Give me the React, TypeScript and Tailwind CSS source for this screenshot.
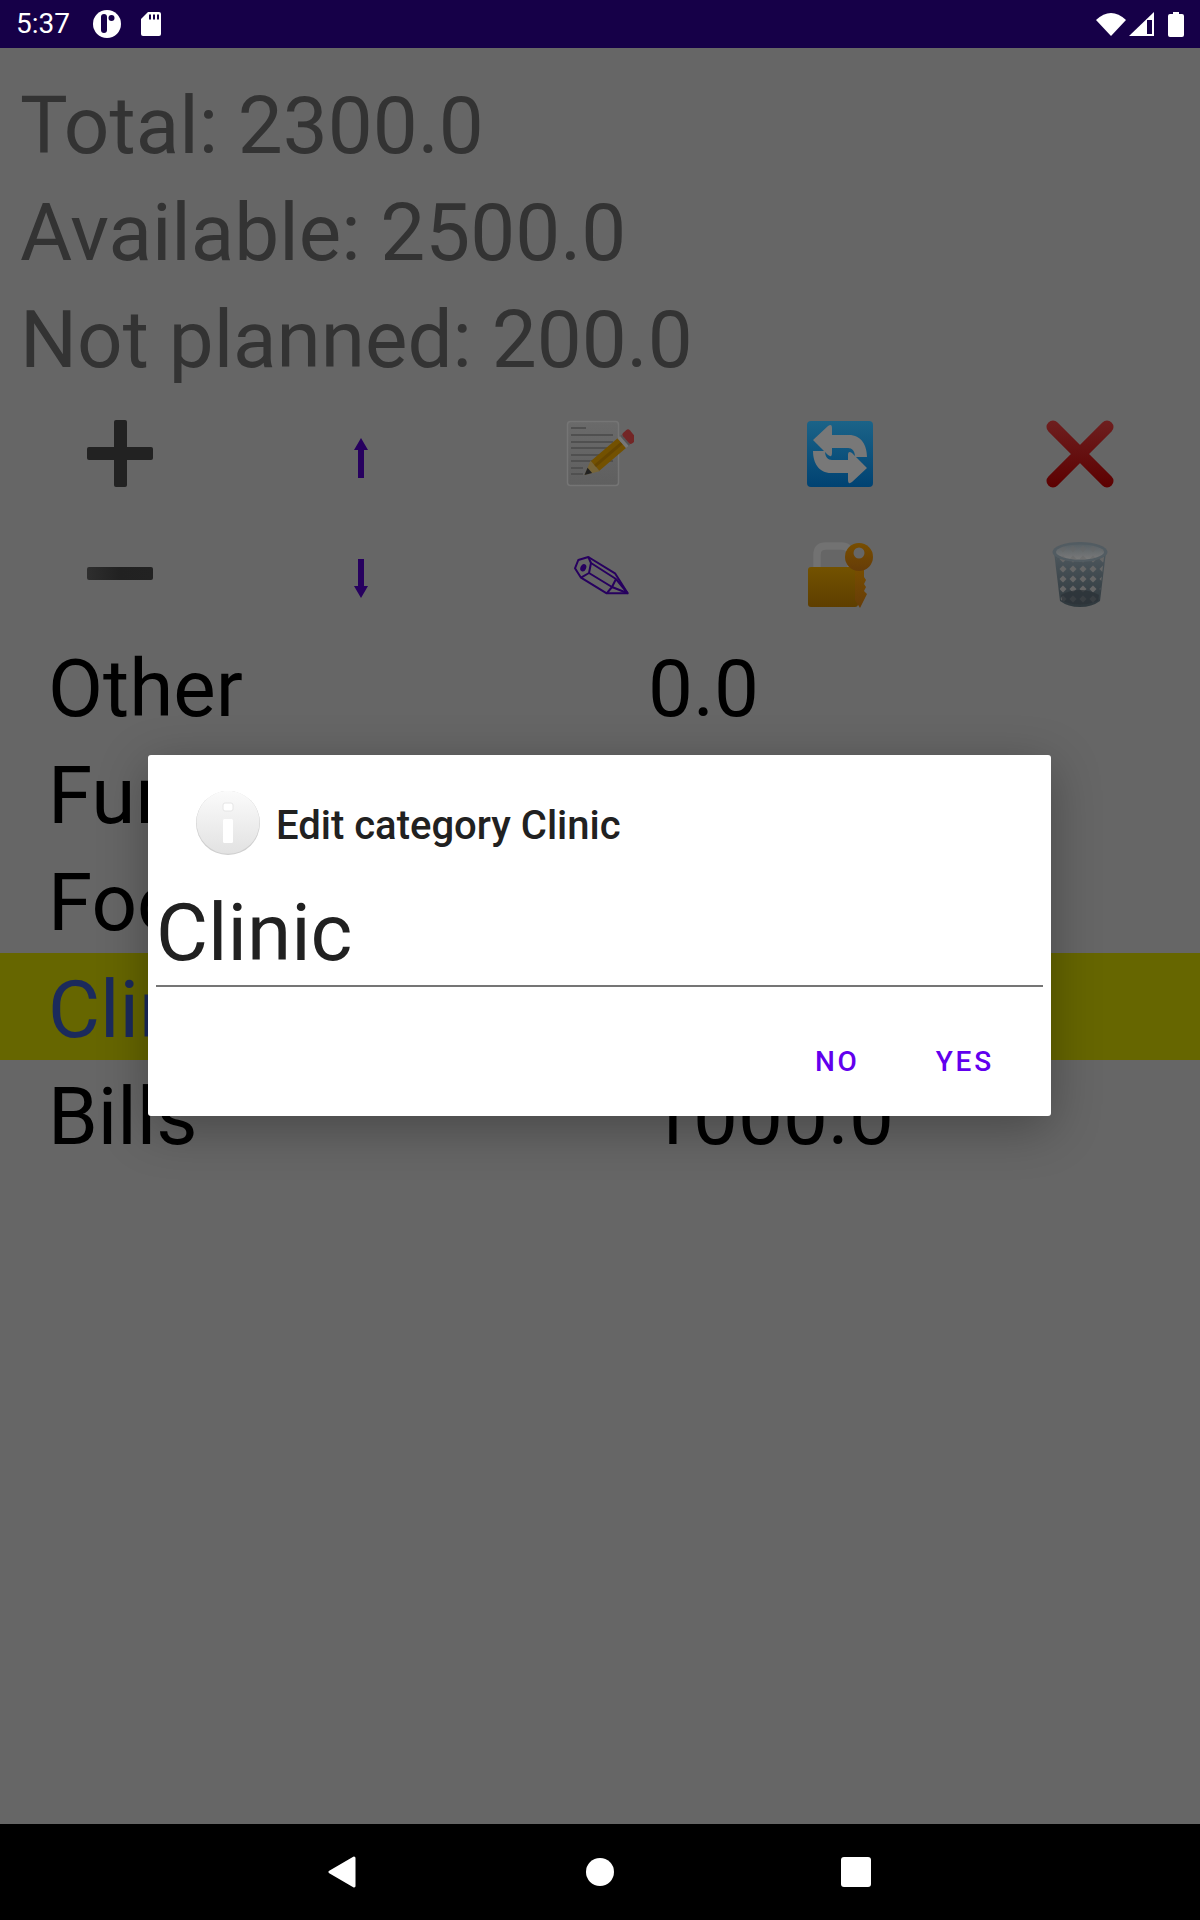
import React from "react";

const roboto = "font-['Roboto',sans-serif]";

function Plus() {
  return (
    <svg width="68" height="68" viewBox="0 0 68 68">
      <rect x="1" y="27" width="66" height="13" rx="2" fill="#222222" />
      <rect x="28" y="0" width="13" height="67" rx="2" fill="#222222" />
    </svg>
  );
}
function Minus() {
  return (
    <svg width="68" height="68" viewBox="0 0 68 68">
      <defs>
        <linearGradient id="mn" x1="0" x2="1" y1="0" y2="0">
          <stop offset="0" stopColor="#2e2e2e" />
          <stop offset="0.5" stopColor="#212121" />
          <stop offset="1" stopColor="#222222" />
        </linearGradient>
      </defs>
      <rect x="1" y="27" width="66" height="13" rx="2" fill="url(#mn)" />
    </svg>
  );
}
function ArrowUp() {
  return (
    <svg width="68" height="68" viewBox="0 0 68 68">
      <path d="M35 18 L42 30 H38 V58 H32 V30 H28 Z" fill="#27005f" />
    </svg>
  );
}
function ArrowDown() {
  return (
    <svg width="68" height="68" viewBox="0 0 68 68">
      <path d="M32 19 H38 V46 H42 L35 58 L28 46 H32 Z" fill="#27005f" />
    </svg>
  );
}
function NotePencil() {
  const lines = [7, 14, 21, 27, 34, 40, 47, 53];
  return (
    <svg width="68" height="68" viewBox="0 0 68 68">
      <defs>
        <linearGradient id="doc" x1="0" x2="0" y1="0" y2="1">
          <stop offset="0" stopColor="#6a6a6a" />
          <stop offset="1" stopColor="#5f5f5f" />
        </linearGradient>
      </defs>
      <rect x="1.5" y="1.5" width="51" height="64" rx="3" fill="url(#doc)" stroke="#757575" strokeWidth="1.5" />
      {lines.map((y, i) => (
        <rect key={y} x="5" y={y} width={i === 0 ? 15 : i > 5 ? 12 : 42} height="2" fill="#505050" />
      ))}
      <g transform="translate(18.5 55) rotate(-40.5)">
        <path d="M0 0 L14 -7 V7 Z" fill="#776538" />
        <path d="M0 0 L7 -3.5 V3.5 Z" fill="#222222" />
        <rect x="14" y="-6.5" width="35" height="13" fill="#735100" />
        <rect x="14" y="-1.5" width="35" height="3" fill="#664600" />
        <rect x="49" y="-6.5" width="3.5" height="13" fill="#777777" />
        <rect x="52.5" y="-6.5" width="2" height="13" fill="#555555" />
        <rect x="54.5" y="-7" width="9" height="14" rx="2.5" fill="#732626" />
      </g>
    </svg>
  );
}
function Refresh() {
  const arrow =
    "M6 19 L21 5 Q25 2 25 7 V14 H42 C54 14 60 24 60 36 H48 C48 30 45 27 41 27 H25 V32 Q25 37 21 34 Z";
  return (
    <svg width="66" height="66" viewBox="0 0 66 66">
      <defs>
        <linearGradient id="bl" x1="0" x2="0" y1="0" y2="1">
          <stop offset="0" stopColor="#1b6388" />
          <stop offset="1" stopColor="#004272" />
        </linearGradient>
      </defs>
      <rect x="0" y="0" width="66" height="66" rx="4" fill="url(#bl)" />
      <path d={arrow} fill="#787878" />
      <path d={arrow} fill="#787878" transform="rotate(180 33 33)" />
    </svg>
  );
}
function Cross() {
  return (
    <svg width="68" height="68" viewBox="0 0 68 68">
      <defs>
        <linearGradient id="xg" gradientUnits="userSpaceOnUse" x1="0" x2="0" y1="0" y2="68">
          <stop offset="0" stopColor="#6e1f1f" />
          <stop offset="1" stopColor="#5c0000" />
        </linearGradient>
      </defs>
      <path d="M7 7 L61 61 M61 7 L7 61" stroke="url(#xg)" strokeWidth="13" strokeLinecap="round" fill="none" />
    </svg>
  );
}
function OutlinePencil() {
  return (
    <svg width="68" height="68" viewBox="0 0 68 68">
      <g fill="none" stroke="#27005f" strokeWidth="2" strokeLinejoin="round">
        <path d="M22.3 17 L49 33.3 L61.7 53.3 H40.7 L15 37.7 L9 28.3 L12.3 20 Z" />
        <path d="M22.3 17 L25 23 L23 33 L15 37.7" />
        <path d="M25 23 L50 39 M23 33 L46 47 L40.7 53.3 M50 39 L46 47 M50 39 L61.7 53.3 M46 47 L61.7 53.3" />
      </g>
      <ellipse cx="17.3" cy="27.7" rx="2.8" ry="3.8" transform="rotate(25 17.3 27.7)" fill="#27005f" />
    </svg>
  );
}
function LockKey() {
  return (
    <svg width="68" height="68" viewBox="0 0 68 68">
      <defs>
        <linearGradient id="lk" x1="0" x2="0" y1="0" y2="1">
          <stop offset="0" stopColor="#735200" />
          <stop offset="1" stopColor="#5e3e00" />
        </linearGradient>
        <linearGradient id="ky" x1="0" x2="0" y1="0" y2="1">
          <stop offset="0" stopColor="#784e00" />
          <stop offset="1" stopColor="#663c08" />
        </linearGradient>
      </defs>
      <path d="M11 28 V15 C11 8 15 6 20 6 H35 C41 6 45 9 45 15 V28" fill="none" stroke="#727272" strokeWidth="7.5" />
      <rect x="2" y="27" width="50" height="40" rx="3" fill="url(#lk)" />
      <path d="M49 28 H58 V37 L60 40 L58 44 L60 47 L58 51 L61 54 L54 68 L49 60 Z" fill="url(#ky)" />
      <circle cx="53" cy="17" r="14" fill="url(#ky)" />
      <circle cx="53" cy="13" r="5.5" fill="#666666" />
    </svg>
  );
}
function Trash() {
  return (
    <svg width="68" height="68" viewBox="0 0 68 68">
      <defs>
        <linearGradient id="tb" x1="0" x2="0" y1="0" y2="1">
          <stop offset="0" stopColor="#4e585e" />
          <stop offset="1" stopColor="#2f383d" />
        </linearGradient>
        <pattern id="mesh" width="10" height="10" patternUnits="userSpaceOnUse" patternTransform="translate(2 14)">
          <path d="M5 1.5 L8.5 5 L5 8.5 L1.5 5 Z" fill="#666666" />
        </pattern>
        <linearGradient id="rim" x1="0" x2="0" y1="0" y2="1">
          <stop offset="0" stopColor="#586166" />
          <stop offset="1" stopColor="#7a7a7a" />
        </linearGradient>
      </defs>
      <path d="M8 12 L14 61 Q22 67 34 67 Q46 67 54 61 L60 12 Z" fill="url(#tb)" />
      <path d="M10 17 L15 60 Q24 65 34 65 Q44 65 53 60 L58 17 Z" fill="url(#mesh)" />
      <path d="M15 55 Q34 45 53 55 L52 61 Q34 68 16 61 Z" fill="#2c3338" opacity="0.75" />
      <ellipse cx="34" cy="12" rx="27.5" ry="10" fill="#525c62" />
      <ellipse cx="34" cy="12" rx="24" ry="7.5" fill="url(#rim)" />
      <ellipse cx="34" cy="12" rx="24" ry="7.5" fill="url(#mesh)" opacity="0.5" />
    </svg>
  );
}

function InfoIcon() {
  return (
    <svg width="64" height="64" viewBox="0 0 64 64" className="shrink-0">
      <defs>
        <linearGradient id="inf" x1="0" x2="0" y1="0" y2="1">
          <stop offset="0" stopColor="#fbfbfb" />
          <stop offset="1" stopColor="#e2e2e2" />
        </linearGradient>
      </defs>
      <circle cx="32" cy="32" r="32" fill="#cfcfcf" />
      <circle cx="32" cy="31.3" r="31.5" fill="url(#inf)" />
      <rect x="27" y="12" width="10" height="8" rx="2" fill="#ffffff" stroke="#e6e6e6" strokeWidth="1" />
      <rect x="27" y="28" width="10" height="24" rx="1.5" fill="#ffffff" />
    </svg>
  );
}

const headline = ["Total: 2300.0", "Available: 2500.0", "Not planned: 200.0"];

const rows = [
  { name: "Other", value: "0.0" },
  { name: "Furniture", value: "300.0" },
  { name: "Food", value: "500.0" },
  { name: "Clinic", value: "500.0", on: true },
  { name: "Bills", value: "1000.0" },
];

const icons = [
  <Plus key="a" />,
  <ArrowUp key="b" />,
  <NotePencil key="c" />,
  <Refresh key="d" />,
  <Cross key="e" />,
  <Minus key="f" />,
  <ArrowDown key="g" />,
  <OutlinePencil key="h" />,
  <LockKey key="i" />,
  <Trash key="j" />,
];

export default function App() {
  return (
    <div className={`relative flex h-[1920px] w-[1200px] flex-col overflow-hidden bg-[#666666] ${roboto}`}>
      <div className="flex h-12 shrink-0 items-center justify-between bg-[#160048] pl-4 pr-4 text-white">
        <div className="flex items-center">
          <span className="text-[28px] leading-none">5:37</span>
          <svg width="28" height="28" viewBox="0 0 28 28" className="ml-[23px]">
            <circle cx="14" cy="14" r="14" fill="#ffffff" />
            <path d="M8 7 a3 3 0 0 1 6 0 V20 a3 3 0 0 1 -6 0 Z" fill="#160048" />
            <circle cx="18.5" cy="8" r="3" fill="#160048" />
          </svg>
          <svg width="20" height="24" viewBox="0 0 20 24" className="ml-5">
            <path d="M7 0 H18 Q20 0 20 2 V22 Q20 24 18 24 H2 Q0 24 0 22 V7 Z" fill="#ffffff" />
            <rect x="8" y="2.5" width="2" height="5" fill="#160048" />
            <rect x="12" y="2.5" width="2" height="5" fill="#160048" />
            <rect x="16" y="2.5" width="2" height="5" fill="#160048" />
          </svg>
        </div>
        <div className="flex items-center">
          <svg width="30" height="24" viewBox="0 0 30 24">
            <path d="M0 8 Q15 -6 30 8 L15 24 Z" fill="#ffffff" />
          </svg>
          <svg width="25" height="24" viewBox="0 0 25 24" className="ml-[3px]">
            <path d="M0 24 L25 0 V24 Z" fill="#ffffff" />
            <path d="M18 8 H23 V22 H18 Z" fill="#160048" />
          </svg>
          <svg width="16" height="25" viewBox="0 0 16 25" className="ml-[14px]">
            <path d="M5 0 H11 V2 H14 Q16 2 16 4 V23 Q16 25 14 25 H2 Q0 25 0 23 V4 Q0 2 2 2 H5 Z" fill="#ffffff" />
          </svg>
        </div>
      </div>

      <div className="flex-1">
        <div className="pl-5 pt-[25px]">
          {headline.map((t) => (
            <div key={t} className="h-[107px] text-[80px] leading-[107px] text-[#333333]">
              {t}
            </div>
          ))}
        </div>
        <div className="grid h-[238px] grid-cols-5 grid-rows-[120px_118px]">
          {icons.map((icon, i) => (
            <div key={i} className="flex h-[120px] items-center justify-center">
              {icon}
            </div>
          ))}
        </div>
        <div>
          {rows.map((r) => (
            <div
              key={r.name}
              className={`flex h-[107px] pl-12 pt-[7px] text-[80px] leading-[100px] ${
                r.on ? "bg-[#666600] text-[#1b2a5c]" : "text-black"
              }`}
            >
              <span className="w-[600px]">{r.name}</span>
              <span>{r.value}</span>
            </div>
          ))}
        </div>
      </div>

      <div className="flex h-24 shrink-0 items-center justify-center bg-black pr-[2px]">
        <svg width="28" height="32" viewBox="0 0 28 32">
          <path d="M26 2 L2 16 L26 30 Z" fill="#ffffff" stroke="#ffffff" strokeWidth="3" strokeLinejoin="round" />
        </svg>
        <div className="ml-[230px] h-7 w-7 rounded-full bg-white" />
        <div className="ml-[227px] h-[30px] w-[30px] rounded-[3px] bg-white" />
      </div>

      <div className="absolute left-[148px] top-[755px] flex h-[361px] w-[903px] flex-col rounded-[3px] bg-white pl-2 pr-2 shadow-[0_12px_50px_rgba(0,0,0,0.3)]">
        <div className="flex items-center pl-10 pt-9">
          <InfoIcon />
          <span className="ml-4 mt-[6px] text-[40px] font-medium leading-[48px] text-[#212121]">
            Edit category Clinic
          </span>
        </div>
        <div className="mt-[38px] h-[94px] border-b-2 border-[#757575] text-[80px] leading-[80px] text-[#212121]">
          Clinic
        </div>
        <div className="flex justify-end gap-[76px] pr-[49px] pt-[63px] text-[28px] font-medium leading-[24px] tracking-[2.8px] text-[#6200ee]">
          <span>NO</span>
          <span>YES</span>
        </div>
      </div>
    </div>
  );
}
